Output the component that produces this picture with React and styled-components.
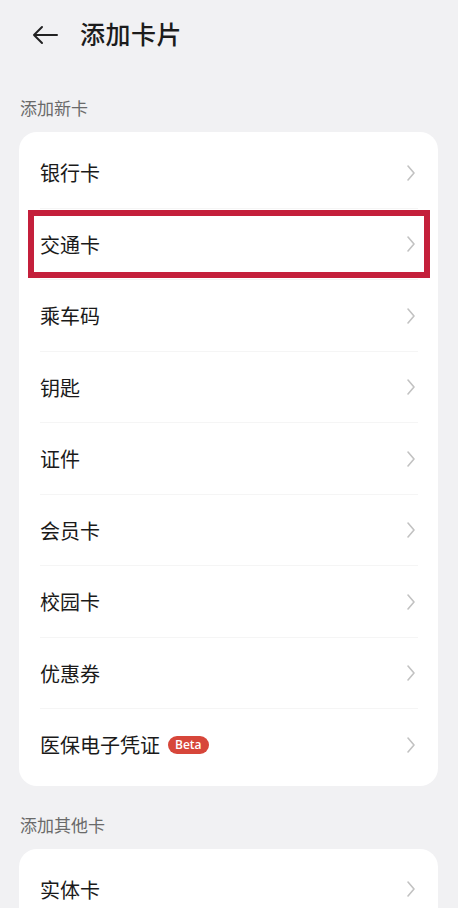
import React from "react";
import styled, { createGlobalStyle } from "styled-components";

const GlobalStyle = createGlobalStyle`
  html, body {
    margin: 0;
    padding: 0;
    background: #f1f1f3;
    font-family: "Noto Sans CJK SC", "Noto Sans", sans-serif;
  }
`;

const Page = styled.div`
  width: 458px;
  height: 908px;
  overflow: hidden;
  background: #f1f1f3;
  padding: 0 20px 0 19px;
  box-sizing: border-box;
`;

const Header = styled.div`
  height: 70px;
  display: flex;
  align-items: center;
  padding-left: 13px;
  gap: 22px;
`;

const Title = styled.h1`
  margin: 0 0 5px;
  font-size: 25px;
  font-weight: 500;
  color: #1c1c1c;
  letter-spacing: 0.5px;
`;

const SectionLabel = styled.div`
  padding: ${(p) => (p.$first ? "26px" : "27px")} 0 12px 1px;
  line-height: 24px;
  font-size: 17px;
  color: #6a6a6a;
`;

const Card = styled.div`
  background: #fff;
  border-radius: 18px;
  padding: 5px 0;
`;

const Row = styled.div`
  position: relative;
  height: 71.5px;
  display: flex;
  align-items: center;
  justify-content: space-between;
  padding: 0 22px 0 21px;
  &:not(:last-child)::after {
    content: "";
    position: absolute;
    left: 21px;
    right: 20px;
    bottom: 0;
    height: 1px;
    background: #f5f5f5;
  }
  ${(p) =>
    p.$highlighted &&
    `
    &::before {
      content: "";
      position: absolute;
      left: 9px;
      right: 8px;
      top: 1px;
      bottom: 2px;
      border: 6px solid #c41f3b;
      z-index: 2;
    }
  `}
`;

const Label = styled.span`
  display: flex;
  align-items: center;
  gap: 8px;
  font-size: 20px;
  color: #1a1a1a;
`;

const Badge = styled.span`
  display: inline-flex;
  align-items: center;
  height: 18px;
  padding: 0 7px;
  border-radius: 9px;
  background: #d7463a;
  color: #fff;
  font-family: "Open Sans", "Noto Sans", sans-serif;
  font-size: 12px;
  font-weight: 600;
`;

const BackArrow = () => (
  <svg width="26" height="20" viewBox="0 0 26 20" fill="none">
    <path
      d="M25 10H2M10 2L2 10l8 8"
      stroke="#222"
      strokeWidth="2"
      strokeLinecap="round"
      strokeLinejoin="round"
    />
  </svg>
);

const Chevron = () => (
  <svg width="10" height="18" viewBox="0 0 10 18" fill="none">
    <path
      d="M2 2l6 7-6 7"
      stroke="#c2c2c2"
      strokeWidth="1.6"
      strokeLinecap="round"
      strokeLinejoin="round"
    />
  </svg>
);

const newCards = [
  { name: "银行卡" },
  { name: "交通卡", highlighted: true },
  { name: "乘车码" },
  { name: "钥匙" },
  { name: "证件" },
  { name: "会员卡" },
  { name: "校园卡" },
  { name: "优惠券" },
  { name: "医保电子凭证", beta: true },
];

const CardRow = ({ name, beta, highlighted }) => (
  <Row $highlighted={highlighted}>
    <Label>
      {name}
      {beta && <Badge>Beta</Badge>}
    </Label>
    <Chevron />
  </Row>
);

const App = () => {
  return (
    <Page>
      <GlobalStyle />
      <Header>
        <BackArrow />
        <Title>添加卡片</Title>
      </Header>

      <SectionLabel $first>添加新卡</SectionLabel>
      <Card>
        {newCards.map((c) => (
          <CardRow key={c.name} {...c} />
        ))}
      </Card>

      <SectionLabel>添加其他卡</SectionLabel>
      <Card>
        <CardRow name="实体卡" />
      </Card>
    </Page>
  );
};

export default App;
